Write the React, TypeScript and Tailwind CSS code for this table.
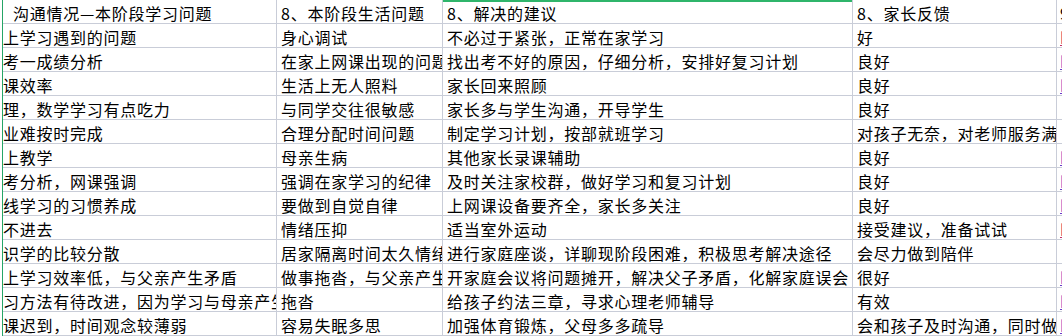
import React from 'react'

const header = ['沟通情况—本阶段学习问题', '8、本阶段生活问题', '8、解决的建议', '8、家长反馈', '9、']

const rows: [string, string, string, string, boolean][] = [
  ['上学习遇到的问题', '身心调试', '不必过于紧张，正常在家学习', '好', true],
  ['考一成绩分析', '在家上网课出现的问题', '找出考不好的原因，仔细分析，安排好复习计划', '良好', true],
  ['课效率', '生活上无人照料', '家长回来照顾', '良好', true],
  ['理，数学学习有点吃力', '与同学交往很敏感', '家长多与学生沟通，开导学生', '良好', false],
  ['业难按时完成', '合理分配时间问题', '制定学习计划，按部就班学习', '对孩子无奈，对老师服务满意', false],
  ['上教学', '母亲生病', '其他家长录课辅助', '良好', true],
  ['考分析，网课强调', '强调在家学习的纪律', '及时关注家校群，做好学习和复习计划', '良好', true],
  ['线学习的习惯养成', '要做到自觉自律', '上网课设备要齐全，家长多关注', '良好', true],
  ['不进去', '情绪压抑', '适当室外运动', '接受建议，准备试试', true],
  ['识学的比较分散', '居家隔离时间太久情绪', '进行家庭座谈，详聊现阶段困难，积极思考解决途径', '会尽力做到陪伴', false],
  ['上学习效率低，与父亲产生矛盾', '做事拖沓，与父亲产生矛盾', '开家庭会议将问题摊开，解决父子矛盾，化解家庭误会', '很好', true],
  ['习方法有待改进，因为学习与母亲产生矛盾', '拖沓', '给孩子约法三章，寻求心理老师辅导', '有效', true],
  ['课迟到，时间观念较薄弱', '容易失眠多思', '加强体育锻炼，父母多多疏导', '会和孩子及时沟通，同时做好', true],
]

const cell =
  'h-[24px] border-r border-b border-[#c9cdd8] overflow-hidden whitespace-nowrap flex items-center pt-[2px]'

export default function App() {
  return (
    <div
      className="w-[1062px] h-[336px] bg-white overflow-hidden pl-[2px] text-black"
      style={{ fontFamily: '"Noto Sans CJK SC", "Liberation Sans", sans-serif' }}
    >
      <div className="grid grid-cols-[274px_166px_410px_204px_1fr] border-l border-[#25a566] text-[16px] tracking-[0.75px] leading-none">
        <div className={`${cell} pl-[10px]`}>{header[0]}</div>
        <div className={`${cell} pl-[4px]`}>{header[1]}</div>
        <div className={`${cell} pl-[4px] shadow-[inset_0_2px_0_#2fb56b]`}>{header[2]}</div>
        <div className={`${cell} pl-[4px]`}>{header[3]}</div>
        <div className={`${cell} pl-[3px] border-r-0`}>{header[4]}</div>

        {rows.map((r, i) => (
          <React.Fragment key={i}>
            <div className={`${cell} pl-0`}>{r[0]}</div>
            <div className={`${cell} pl-[4px]`}>{r[1]}</div>
            <div className={`${cell} pl-[4px]`}>{r[2]}</div>
            <div className={`${cell} pl-[4px]`}>{r[3]}</div>
            <div className={`${cell} pl-[3px] border-r-0`}>
              {r[4] && (
                <span className={`underline ${i === 0 || i === 8 ? 'text-[#c0306a]' : 'text-[#6a3cc8]'}`}>
                  http
                </span>
              )}
            </div>
          </React.Fragment>
        ))}
      </div>
    </div>
  )
}
